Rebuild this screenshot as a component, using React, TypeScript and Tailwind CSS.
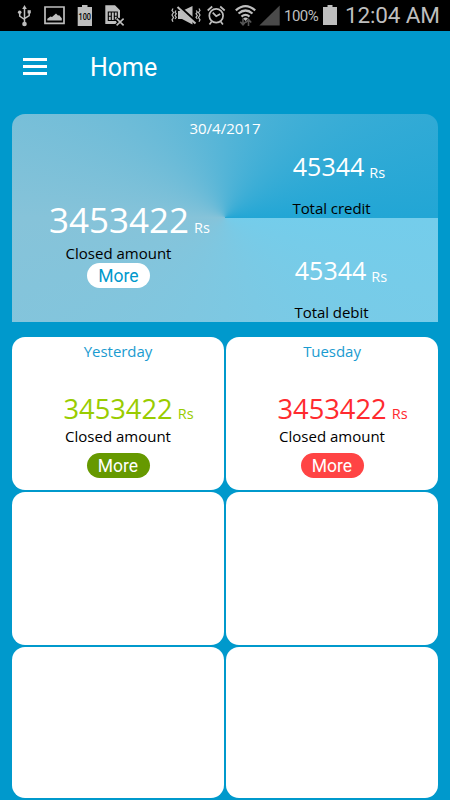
import React from 'react';
import clsx from 'clsx';

interface DayCardProps {
    title?: string;
    amount?: string;
    tone?: 'green' | 'red';
}

interface TotalProps {
    amount: string;
    label: string;
    className?: string;
}

function StatusBar() {
    return (
        <div className="flex h-[31px] items-center bg-black text-[#bebebe] font-[Roboto,sans-serif]">
            {/* usb */}
            <svg className="ml-[17px] shrink-0" width="15" height="31" viewBox="17 0 15 31" fill="none" stroke="currentColor" strokeWidth="1.5">
                <path d="M24.5 8v14M19.7 13v3.2l4.8 3.3M29.2 12.5v3.2l-4.7 3" />
                <path d="M24.5 5l2.3 4h-4.6z" fill="currentColor" stroke="none" />
                <circle cx="24.5" cy="24" r="2.3" fill="currentColor" stroke="none" />
                <circle cx="19.7" cy="12.3" r="1.8" fill="currentColor" stroke="none" />
                <path d="M27.6 10.2h3.2v3.2h-3.2z" fill="currentColor" stroke="none" />
            </svg>
            {/* picture */}
            <svg className="ml-[12px] shrink-0" width="21" height="31" viewBox="44 0 21 31">
                <path d="M45 7h19v16.3H45z" fill="none" stroke="currentColor" strokeWidth="1.7" />
                <path d="M47.3 20.5v-1.8l3.2-2.3 1.5.6 4-3.5 2 2 1.2-.3 2.6 3v2.3z" fill="currentColor" />
            </svg>
            {/* full battery */}
            <svg className="ml-[12px] shrink-0" width="16" height="31" viewBox="77 0 16 31">
                <path d="M82 5h5.5v2H92v19H77.7V7H82z" fill="currentColor" />
                <text x="84.8" y="20" textAnchor="middle" fontSize="9" fontWeight="500" fill="#000" textLength="12.5" lengthAdjust="spacingAndGlyphs">100</text>
            </svg>
            {/* no sim */}
            <svg className="ml-[12px] shrink-0" width="20" height="31" viewBox="105 0 20 31">
                <path d="M105.3 5.3h9.7l5 5v7.2l-4 4 2 2.5h-12.7z" fill="currentColor" />
                <path d="M108.3 12h9v8.5h-9zM111.3 12v8.5M114.3 12v8.5M108.3 16.2h3M114.3 16.2h3" fill="none" stroke="#000" strokeWidth="1.1" />
                <path d="M116.3 18.3l7.4 7.2M123.7 18.3l-7.4 7.2" stroke="#000" strokeWidth="3.6" />
                <path d="M116.6 18.6l7 6.8M123.6 18.6l-7 6.8" stroke="currentColor" strokeWidth="1.6" />
            </svg>
            {/* vibrate, sound off */}
            <svg className="ml-[46px] shrink-0" width="30" height="31" viewBox="171 0 30 31" fill="none" stroke="currentColor" strokeWidth="1.2">
                <path d="M173 8.5l-1 2 1.5 2-1.5 2.5 1.5 2.5-1.5 2.3 1 2M176 10.5l-1 1.6 1.3 1.7-1.3 1.7 1.3 1.8-1.3 1.7" />
                <path d="M199 8.5l1 2-1.5 2 1.5 2.5-1.5 2.5 1.5 2.3-1 2M196.3 10.5l1 1.6-1.3 1.7 1.3 1.7-1.3 1.8 1.3 1.7" />
                <path d="M178 11h4l10.5-5v18.5L182 19h-4z" fill="currentColor" stroke="none" />
                <path d="M178 6l18.5 16.5" stroke="#000" strokeWidth="3.4" />
                <path d="M177.5 7l18 16.5" strokeWidth="2" />
            </svg>
            {/* alarm */}
            <svg className="ml-[6px] shrink-0" width="19" height="31" viewBox="207 0 19 31" fill="none" stroke="currentColor" strokeWidth="1.7">
                <circle cx="216.2" cy="15.7" r="6.9" />
                <path d="M212.7 12.7l3.5 3.5 4-2.3M207.7 10.5l4.5-4M224.7 10.5l-4.5-4M211.7 21.5l-2.2 3M220.7 21.5l2.2 3" />
            </svg>
            {/* wifi with traffic arrows */}
            <svg className="ml-[9px] shrink-0" width="22" height="31" viewBox="235 0 22 31" fill="none">
                <path d="M235.8 10.3q9.7-8.5 19.4 0M238.5 13.5q7-6 14 0M241.5 16.6q4-3.5 8 0" stroke="currentColor" strokeWidth="2.2" />
                <path d="M243 18.3q2.5-1.8 5 0l-2.5 2.7z" fill="currentColor" />
                <path d="M243 18.5v6M240.3 21.8l2.7 3 2.7-3M248.5 26v-6M245.8 22.5l2.7-3 2.7 3" stroke="#555" strokeWidth="1.6" />
            </svg>
            {/* signal */}
            <svg className="ml-[2px] shrink-0" width="21" height="31" viewBox="259 0 21 31">
                <path d="M279.7 5.5v20h-20.4z" fill="#4a4a4a" />
            </svg>
            <span className="ml-[4px] w-[39px] shrink-0 text-[15px] leading-[32px] tracking-[-0.5px]">100%</span>
            <svg className="shrink-0" width="14" height="31" viewBox="323 0 14 31">
                <path d="M327.5 5h5v2h4.5v18h-14V7h4.500z" fill="currentColor" />
            </svg>
            <span className="ml-[8px] shrink-0 text-[22.5px] leading-[31px] tracking-[-0.15px] whitespace-nowrap">12:04 AM</span>
        </div>
    );
}

function Total({ amount, label, className }: TotalProps) {
    return (
        <div className="flex h-[104px] flex-col items-center pt-[34.5px]">
            <div className={clsx('flex items-baseline', className)}>
                <span className="text-[25px] leading-[36px]">{amount}</span>
                <span className="relative top-[2px] ml-[5px] text-[14.5px] leading-5">Rs</span>
            </div>
            <span className="mt-[14px] text-[15px] leading-5 tracking-[-0.05px] text-black">{label}</span>
        </div>
    );
}

function Summary() {
    return (
        <section className="relative grid h-[208.5px] grid-cols-2 overflow-hidden rounded-t-[13px] bg-[conic-gradient(from_90deg_at_50%_49.8%,#74cdeb,#86c3d9_50%,#22a6d5)] text-white">
            <span className="absolute inset-x-0 top-[4.5px] text-center text-[15px] leading-5">30/4/2017</span>
            <div className="flex flex-col items-center pt-[82.5px]">
                <div className="flex items-baseline pl-[22px]">
                    <span className="text-[35px] leading-[48px]">3453422</span>
                    <span className="ml-[5px] text-[14.5px] leading-5">Rs</span>
                </div>
                <span className="-mt-px text-[15px] leading-5 text-black">Closed amount</span>
                <button className="h-[25px] w-[63px] rounded-full bg-white font-[Roboto,sans-serif] text-[17.5px] leading-[27px] text-[#0099cc]">
                    More
                </button>
            </div>
            <div className="flex flex-col">
                <Total amount="45344" label="Total credit" className="pl-[15px]" />
                <Total amount="45344" label="Total debit" className="pl-[19px]" />
            </div>
        </section>
    );
}

function DayCard({ title, amount, tone }: DayCardProps) {
    return (
        <div className="flex flex-col items-center rounded-[13px] bg-white pt-[4px]">
            {title && (
                <>
                    <span className="text-[15px] leading-5 tracking-[-0.05px] text-[#1a9bd0]">{title}</span>
                    <div className={clsx('mt-[29px] flex items-baseline pl-[21px]', tone === 'green' ? 'text-[#99cc00]' : 'text-[#ff2a2f]')}>
                        <span className="text-[27.3px] leading-[38px]">{amount}</span>
                        <span className="ml-[5px] text-[14.5px] leading-5">Rs</span>
                    </div>
                    <span className="-mt-[2px] text-[15px] leading-5 text-black">Closed amount</span>
                    <button
                        className={clsx(
                            'mt-[6.5px] h-[25px] w-[63px] rounded-full font-[Roboto,sans-serif] text-[17.5px] leading-[27px] text-white',
                            tone === 'green' ? 'bg-[#669900]' : 'bg-[#ff4444]'
                        )}
                    >
                        More
                    </button>
                </>
            )}
        </div>
    );
}

const days: DayCardProps[] = [
    { title: 'Yesterday', amount: '3453422', tone: 'green' },
    { title: 'Tuesday', amount: '3453422', tone: 'red' },
    {},
    {},
    {},
    {},
];

export default function App() {
    return (
        <div className="h-[800px] w-[450px] overflow-hidden bg-[#0099cc] font-['Open_Sans','Noto_Sans',sans-serif]">
            <StatusBar />
            <header className="flex h-[70px] items-center pl-[23px]">
                <button className="flex flex-col gap-[4px]" aria-label="Menu">
                    <span className="h-[3px] w-6 bg-white" />
                    <span className="h-[3px] w-6 bg-white" />
                    <span className="h-[3px] w-6 bg-white" />
                </button>
                <h1 className="ml-[43px] pt-[3px] font-[Roboto,sans-serif] text-[25px] text-white">Home</h1>
            </header>
            <main className="px-3 pt-[12.5px]">
                <Summary />
                <div className="mt-[15px] grid grid-cols-2 grid-rows-[153px_153px_150.5px] gap-[2px]">
                    {days.map((day, i) => (
                        <DayCard key={i} {...day} />
                    ))}
                </div>
            </main>
        </div>
    );
}
